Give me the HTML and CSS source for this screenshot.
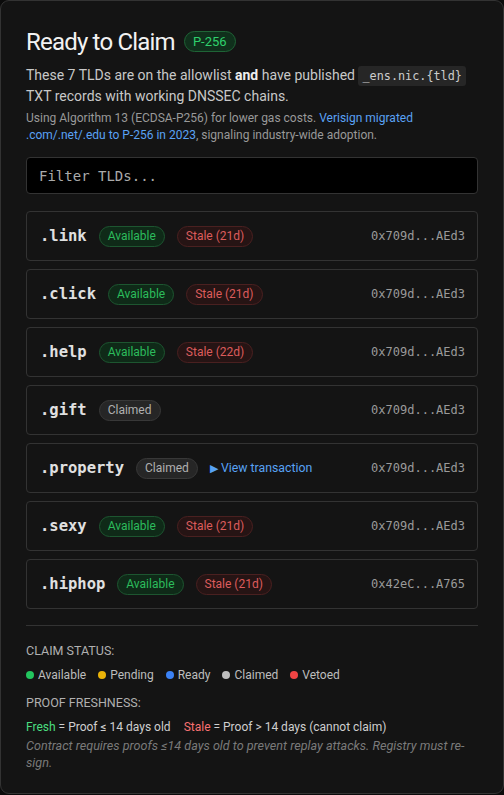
FILE: index.html
```html
<!DOCTYPE html>
<html>
<head>
<meta charset="utf-8">
<link rel="stylesheet" href="styles.css">
</head>
<body>
<div class="card">
  <div class="title-row">
    <h1 class="title">Ready to Claim</h1>
    <span class="algo-badge">P-256</span>
  </div>
  <p class="lead">These 7 TLDs are on the allowlist <b>and</b> have published <code class="code">_ens.nic.{tld}</code> TXT records with working DNSSEC chains.</p>
  <p class="note">Using Algorithm 13 (ECDSA-P256) for lower gas costs. <a class="link" href="#">Verisign migrated .com/.net/.edu to P-256 in 2023</a>, signaling industry-wide adoption.</p>
  <input class="filter" type="text" placeholder="Filter TLDs...">
  <div class="list">
    <div class="row">
      <span class="tld">.link</span>
      <span class="badge ok">Available</span>
      <span class="badge stale">Stale (21d)</span>
      <span class="addr">0x709d...AEd3</span>
    </div>
    <div class="row">
      <span class="tld">.click</span>
      <span class="badge ok">Available</span>
      <span class="badge stale">Stale (21d)</span>
      <span class="addr">0x709d...AEd3</span>
    </div>
    <div class="row">
      <span class="tld">.help</span>
      <span class="badge ok">Available</span>
      <span class="badge stale">Stale (22d)</span>
      <span class="addr">0x709d...AEd3</span>
    </div>
    <div class="row">
      <span class="tld">.gift</span>
      <span class="badge claimed">Claimed</span>
      <span class="addr">0x709d...AEd3</span>
    </div>
    <div class="row">
      <span class="tld">.property</span>
      <span class="badge claimed">Claimed</span>
      <a class="tx" href="#"><span class="tri">▶</span> View transaction</a>
      <span class="addr">0x709d...AEd3</span>
    </div>
    <div class="row">
      <span class="tld">.sexy</span>
      <span class="badge ok">Available</span>
      <span class="badge stale">Stale (21d)</span>
      <span class="addr">0x709d...AEd3</span>
    </div>
    <div class="row">
      <span class="tld">.hiphop</span>
      <span class="badge ok">Available</span>
      <span class="badge stale">Stale (21d)</span>
      <span class="addr">0x42eC...A765</span>
    </div>
  </div>
  <div class="legend">
    <div class="legend-title">CLAIM STATUS:</div>
    <div class="legend-items">
      <span class="item"><i class="dot green"></i>Available</span>
      <span class="item"><i class="dot yellow"></i>Pending</span>
      <span class="item"><i class="dot blue"></i>Ready</span>
      <span class="item"><i class="dot gray"></i>Claimed</span>
      <span class="item"><i class="dot red"></i>Vetoed</span>
    </div>
    <div class="legend-title fresh-title">PROOF FRESHNESS:</div>
    <div class="fresh-line">
      <span><span class="fresh">Fresh</span> = Proof ≤ 14 days old</span>
      <span><span class="stale-t">Stale</span> = Proof &gt; 14 days (cannot claim)</span>
    </div>
    <p class="italic">Contract requires proofs ≤14 days old to prevent replay attacks. Registry must re-sign.</p>
  </div>
</div>
</body>
</html>
```

FILE: styles.css
```css
* { box-sizing: border-box; }
html, body { margin: 0; padding: 0; background: #0b0b0b; }
body {
  font-family: Roboto, "Noto Sans", sans-serif;
  width: 504px;
  height: 795px;
}
.card {
  width: 504px;
  height: 794px;
  background: #141414;
  border: 1px solid #333;
  border-radius: 9px;
  padding: 25px 25px 0 25px;
}
.title-row {
  display: flex;
  align-items: center;
  gap: 9px;
  height: 32px;
}
.title {
  margin: 0;
  font-size: 24px;
  font-weight: 400;
  color: #f2f2f2;
  line-height: 32px;
  letter-spacing: -0.8px;
}
.algo-badge {
  display: inline-flex;
  align-items: center;
  height: 21px;
  padding: 0 8px;
  border-radius: 11px;
  background: #10301c;
  border: 1px solid #1f6436;
  color: #2fd06c;
  font-size: 13px;
  margin-top: -2px;
}
.lead {
  margin: 7px 0 0 0;
  font-size: 14px;
  line-height: 20px;
  color: #c8c8c8;
}
.lead b { color: #eee; font-weight: 700; }
.code {
  font-family: "DejaVu Sans Mono", monospace;
  font-size: 11.8px;
  background: #262626;
  color: #ccc;
  padding: 3px 4px;
  border-radius: 3px;
}
.note {
  margin: 4px 0 0 0;
  font-size: 12px;
  line-height: 16.5px;
  color: #999;
}
.link { color: #5aa2f5; text-decoration: none; }
.filter {
  display: block;
  width: 100%;
  height: 37px;
  margin-top: 14px;
  background: #000;
  border: 1px solid #333;
  border-radius: 4px;
  padding: 0 12px;
  font-family: "DejaVu Sans Mono", monospace;
  font-size: 14px;
  color: #ddd;
  outline: none;
}
.filter::placeholder { color: #aaa; }
.list {
  display: flex;
  flex-direction: column;
  gap: 8px;
  margin-top: 17px;
}
.row {
  display: flex;
  align-items: center;
  gap: 12px;
  height: 50px;
  border: 1px solid #333;
  border-radius: 4px;
  padding: 0 12px 0 13px;
  background: #141414;
}
.tld {
  font-family: "DejaVu Sans Mono", monospace;
  font-weight: 700;
  font-size: 15.5px;
  color: #e0e0e0;
}
.badge {
  display: inline-flex;
  align-items: center;
  height: 21px;
  padding: 0 8px;
  border-radius: 11px;
  font-size: 12px;
  border: 1px solid;
}
.badge.ok { background: #0f2a18; border-color: #1d5630; color: #2cbc5c; }
.badge.stale { background: #261414; border-color: #4a2020; color: #dc5c5c; }
.badge.claimed { background: #262626; border-color: #383838; color: #b0b0b0; }
.tx {
  color: #58a2f4;
  text-decoration: none;
  font-size: 12.3px;
}
.tri { font-size: 10.5px; }
.addr {
  margin-left: auto;
  font-family: "DejaVu Sans Mono", monospace;
  font-size: 12px;
  color: #9a9a9a;
}
.legend {
  margin-top: 16px;
  border-top: 1px solid #333;
  padding-top: 16px;
}
.legend-title {
  font-size: 12.5px;
  line-height: 18px;
  color: #b0b0b0;
}
.legend-items {
  display: flex;
  gap: 12px;
  margin-top: 6px;
  font-size: 12px;
  line-height: 18px;
  color: #bdbdbd;
}
.item { display: inline-flex; align-items: center; }
.dot {
  display: inline-block;
  width: 8px;
  height: 8px;
  border-radius: 50%;
  margin-right: 4px;
}
.dot.green { background: #22c55e; }
.dot.yellow { background: #eab308; }
.dot.blue { background: #3b82f6; }
.dot.gray { background: #bdbdbd; }
.dot.red { background: #ef4444; }
.fresh-title { margin-top: 10px; }
.fresh-line {
  display: flex;
  gap: 13px;
  margin-top: 6px;
  font-size: 12px;
  line-height: 18px;
  color: #cfcfcf;
}
.fresh { color: #4ade80; }
.stale-t { color: #f87171; }
.italic {
  margin: 2px 0 0 0;
  font-size: 12.6px;
  font-style: italic;
  line-height: 16.6px;
  color: #7a7a7a;
}
```
